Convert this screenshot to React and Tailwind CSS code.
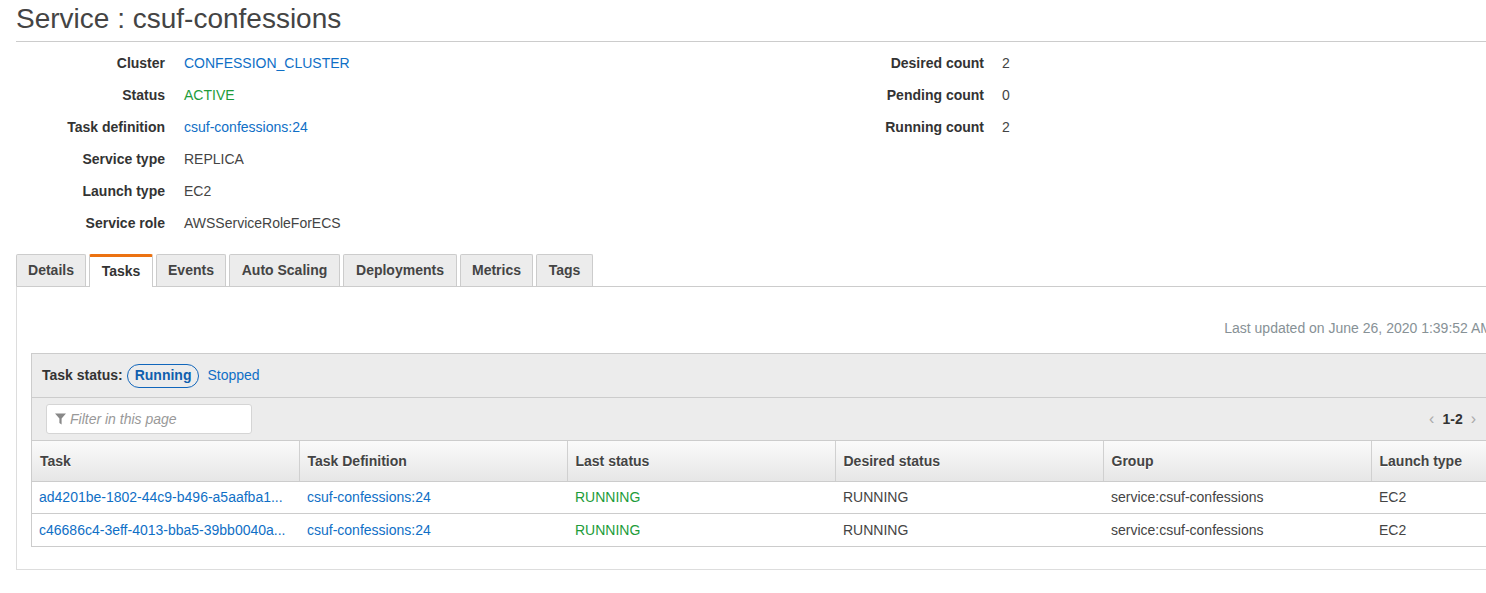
import React from "react";

const F = { fontFamily: '"Liberation Sans", Arial, sans-serif' };

function DRow({ label, children, valueClass = "text-[#444]" }) {
  return (
    <div className="flex h-8 items-center">
      <div className="w-[149px] shrink-0 text-right font-bold text-[#333]">{label}</div>
      <div className={"ml-[19px] " + valueClass}>{children}</div>
    </div>
  );
}

function Tab({ label, active, w }) {
  if (active) {
    return (
      <div className={"relative -mb-px flex h-[33px] items-center justify-center rounded-t-[2px] border-x border-t-[3px] border-x-[#ccc] border-t-[#ec7211] bg-white pb-[2px] font-bold text-[#333] " + w}>
        {label}
      </div>
    );
  }
  return (
    <div className={"flex h-[32px] items-center justify-center rounded-t-[2px] border border-b-0 border-[#ccc] bg-[#ececec] font-bold text-[#444] " + w}>
      {label}
    </div>
  );
}

const cols = ["Task", "Task Definition", "Last status", "Desired status", "Group", "Launch type"];
const rows = [
  ["ad4201be-1802-44c9-b496-a5aafba1...", "csuf-confessions:24", "RUNNING", "RUNNING", "service:csuf-confessions", "EC2"],
  ["c46686c4-3eff-4013-bba5-39bb0040a...", "csuf-confessions:24", "RUNNING", "RUNNING", "service:csuf-confessions", "EC2"],
];

export default function App() {
  return (
    <div className="h-[593px] w-[1486px] overflow-hidden bg-white text-[14px]" style={F}>
      <div className="w-[1540px] pl-4">
        <h1 className="flex h-[41px] items-center pb-[4px] text-[28px] font-normal leading-none text-[#444]">
          Service : csuf-confessions
        </h1>
        <div className="h-px w-full bg-[#ccc]" />

        <div className="mt-[5px] flex">
          <div className="w-[819px]">
            <DRow label="Cluster" valueClass="text-[#0f6fc6]">CONFESSION_CLUSTER</DRow>
            <DRow label="Status" valueClass="text-[#1d9c3a]">ACTIVE</DRow>
            <DRow label="Task definition" valueClass="text-[#0f6fc6]">csuf-confessions:24</DRow>
            <DRow label="Service type">REPLICA</DRow>
            <DRow label="Launch type">EC2</DRow>
            <DRow label="Service role">AWSServiceRoleForECS</DRow>
          </div>
          <div>
            <div className="flex h-8 items-center">
              <div className="w-[149px] text-right font-bold text-[#333]">Desired count</div>
              <div className="ml-[18px] text-[#444]">2</div>
            </div>
            <div className="flex h-8 items-center">
              <div className="w-[149px] text-right font-bold text-[#333]">Pending count</div>
              <div className="ml-[18px] text-[#444]">0</div>
            </div>
            <div className="flex h-8 items-center">
              <div className="w-[149px] text-right font-bold text-[#333]">Running count</div>
              <div className="ml-[18px] text-[#444]">2</div>
            </div>
          </div>
        </div>

        <div className="mt-[15px] flex items-end gap-[3px]">
          <Tab label="Details" w="w-[70px]" />
          <Tab label="Tasks" active w="w-[64px]" />
          <Tab label="Events" w="w-[70px]" />
          <Tab label="Auto Scaling" w="w-[111px]" />
          <Tab label="Deployments" w="w-[114px]" />
          <Tab label="Metrics" w="w-[73px]" />
          <Tab label="Tags" w="w-[57px]" />
        </div>

        <div className="w-[1491px] border border-[#ccc] border-l-[#ddd] border-b-[#ddd] px-[14px] pb-[22px]">
          <div className="mt-[31px] flex h-5 items-center justify-end text-[#879196]">
            Last updated on June 26, 2020 1:39:52 AM
          </div>
          <div className="mt-[15px] border-t border-l border-[#ccc]">
            <div className="flex h-[43px] items-center bg-[#ececec] pl-[10px]">
              <span className="font-bold text-[#333]">Task status:</span>
              <span className="ml-[4px] flex h-6 items-center rounded-full border border-[#1166bb] px-[7px] font-bold text-[#0f5fae]">
                Running
              </span>
              <span className="ml-[8px] text-[#0f6fc6]">Stopped</span>
            </div>
            <div className="flex h-[43px] items-center justify-between border-t border-[#ccc] bg-[#ececec] pl-[14px] pr-[16px]">
              <div className="flex h-[30px] w-[206px] items-center rounded-[3px] border border-[#d5d5d5] bg-white pl-[8px]">
                <svg width="11" height="12" viewBox="0 0 11 12" className="mr-[4px]">
                  <path d="M0 0.5 H11 L6.6 5.5 V11.5 L4.4 10 V5.5 Z" fill="#888" />
                </svg>
                <span className="italic text-[#999]">Filter in this page</span>
              </div>
              <div className="flex items-center">
                <span className="text-[16px] text-[#aaa]">‹</span>
                <span className="ml-[8px] font-bold text-[#333]">1-2</span>
                <span className="ml-[8px] text-[16px] text-[#aaa]">›</span>
              </div>
            </div>
            <table className="w-[1607px] table-fixed border-collapse">
              <thead>
                <tr className="h-[41px] bg-gradient-to-b from-[#fafafa] to-[#e6e6e6]">
                  {cols.map((c, i) => (
                    <th
                      key={c}
                      className={
                        (i === 0 ? "w-[267px] " : "w-[268px] ") +
                        "border-t border-b border-[#ccc] px-[8px] text-left font-bold text-[#444] [text-shadow:0_1px_0_#fff] " +
                        (i > 0 ? "border-l border-l-[#d0d0d0]" : "")
                      }
                    >
                      {c}
                    </th>
                  ))}
                </tr>
              </thead>
              <tbody>
                {rows.map((r, ri) => (
                  <tr key={ri} className={(ri === 0 ? "h-[32px]" : "h-[33px]") + " border-b border-[#ccc]"}>
                    {r.map((v, ci) => (
                      <td
                        key={ci}
                        className={
                          "whitespace-nowrap " +
                          (ci === 0 ? "px-[7px] " : "px-[8px] ") +
                          (ci <= 1
                            ? "text-[#0f6fc6]"
                            : ci === 2
                            ? "text-[#1d9c3a]"
                            : "text-[#444]")
                        }
                      >
                        {v}
                      </td>
                    ))}
                  </tr>
                ))}
              </tbody>
            </table>
          </div>
        </div>
      </div>
    </div>
  );
}
